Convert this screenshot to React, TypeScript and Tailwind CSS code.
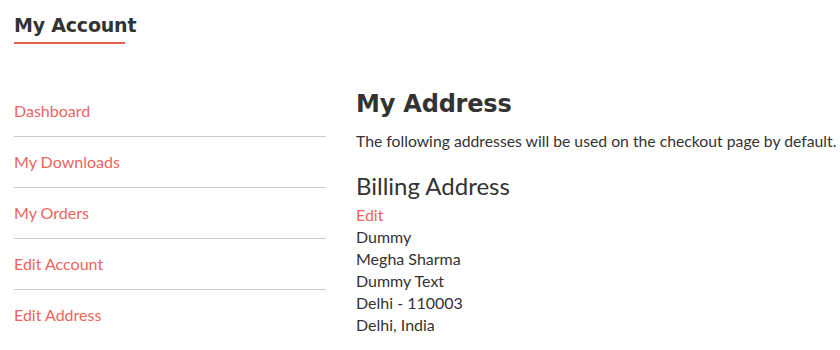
const navItems = ["Dashboard", "My Downloads", "My Orders", "Edit Account", "Edit Address"];

const addressLines = ["Dummy", "Megha Sharma", "Dummy Text", "Delhi - 110003", "Delhi, India"];

const heading = { fontFamily: '"DejaVu Sans", "Open Sans", sans-serif' };

export default function App() {
  return (
    <div
      className="w-[840px] h-[350px] overflow-hidden bg-white text-[#333333]"
      style={{ fontFamily: 'Lato, "Open Sans", sans-serif' }}
    >
      <div className="px-[14px] pt-[13px]">
        <h1 className="text-[19px] leading-[24px] font-bold text-[#333333] tracking-[-0.2px]" style={heading}>
          My Account
        </h1>
        <div className="mt-[5px] h-[2px] w-[111px] bg-[#e8604c]" />
      </div>

      <div className="flex gap-[30px] px-[14px] mt-[42px]">
        <ul className="w-[312px] shrink-0">
          {navItems.map((item, i) => (
            <li
              key={item}
              className={`py-[14px] text-[16px] leading-[22px] text-[#e9655e] ${
                i < navItems.length - 1 ? "border-b border-[#cccccc]" : ""
              }`}
            >
              {item}
            </li>
          ))}
        </ul>

        <div className="pt-[4px] whitespace-nowrap">
          <h2 className="text-[24px] leading-[28px] font-bold text-[#333333] tracking-[-0.2px]" style={heading}>
            My Address
          </h2>
          <p className="mt-[12px] text-[15.75px] leading-[22px]">
            The following addresses will be used on the checkout page by default.
          </p>
          <h3 className="mt-[20px] text-[24px] leading-[28px] text-[#333333]">Billing Address</h3>
          <div className="mt-[4px] text-[16px] leading-[22px] text-[#e9655e]">Edit</div>
          <div className="text-[16px] leading-[22px]">
            {addressLines.map((line) => (
              <div key={line}>{line}</div>
            ))}
          </div>
        </div>
      </div>
    </div>
  );
}
